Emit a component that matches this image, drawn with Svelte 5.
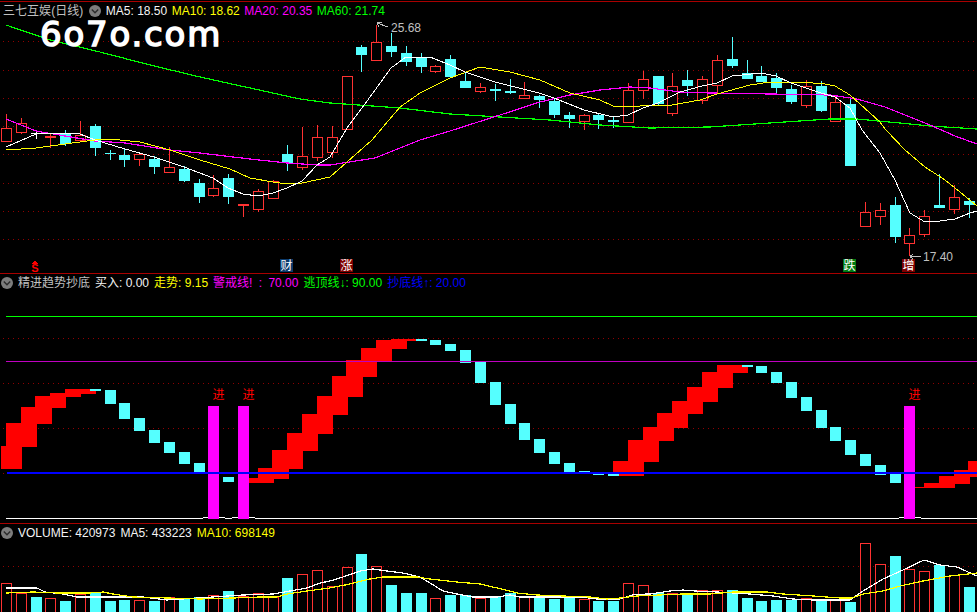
<script>
  const xAt = (i) => Math.floor(6.5 + 14.81 * i)

  // type, high, body top, body bottom, low (page y)
  const candles = [
    ['r',114,128,141,142],['r',118,123,132,134],['w',130,134,134,139],['r',133,137,137,148],
    ['c',130,134,144,146],['r',121,135,140,141],['c',124,126,148,156],['c',150,154,154,160],
    ['c',148,155,160,167],['r',154,154,159,166],['c',156,159,167,174],['r',147,167,172,173],
    ['c',166,169,181,182],['c',179,183,197,203],['r',175,188,195,197],['c',174,178,197,204],
    ['r',205,205,205,217],['r',189,191,209,212],['r',180,181,198,199],['c',145,154,163,171],
    ['r',127,156,167,170],['r',125,137,157,161],['r',126,137,152,158],['r',76,76,129,130],
    ['c',45,47,55,72],['r',25,42,60,60],['c',33,46,52,57],['c',46,53,62,66],
    ['c',53,58,67,73],['r',65,66,71,73],['c',55,59,77,77],['c',72,81,88,88],
    ['r',83,87,91,93],['c',84,89,91,101],['c',79,91,93,94],['r',82,95,98,98],
    ['c',95,96,100,108],['c',98,101,115,118],['c',112,115,119,128],['r',114,115,121,130],
    ['c',114,115,120,129],['c',116,120,122,128],['r',83,90,122,123],['r',71,79,90,99],
    ['c',76,76,104,106],['r',73,86,113,116],['c',70,80,86,96],['r',76,79,100,104],
    ['r',55,60,85,94],['c',37,59,66,68],['c',60,73,79,79],['c',66,76,82,82],
    ['c',73,78,88,95],['c',85,89,102,104],['r',80,86,105,108],['c',81,86,111,112],
    ['r',96,102,121,121],['c',97,104,166,166],['r',202,212,226,226],['r',203,210,216,225],
    ['c',197,205,237,243],['r',228,235,243,256],['r',210,216,234,237],['c',174,205,208,208],
    ['r',185,197,209,214],['c',198,201,205,218]
  ]

  const ma60 = '6,25 50,40 100,52 150,65 200,77 250,88 300,99 330,103 400,108 450,114 500,117 550,120 600,125 650,128 710,127 770,123 830,119 857,119 900,123 930,126 977,129'
  const ma20 = '6,119 36,131 65,136 95,141 125,143 170,150 200,153 250,159 287,163 317,165 330,165 375,158 420,140 450,131 500,115 540,102 570,95 600,90 630,87 650,88 680,92 710,93 770,94 830,95 857,99 885,107 930,125 955,136 977,144'
  const ma10 = '6,150 36,148 65,144 95,140 110,139 140,142 170,150 200,160 230,169 250,178 273,182 287,184 302,183 330,177 372,140 400,107 420,93 450,78 480,67 510,72 540,80 570,93 600,100 613,106 640,106 672,105 700,100 717,94 750,85 770,82 800,82 825,84 835,86 850,95 880,122 886,130 905,150 925,167 945,180 960,192 977,206'
  const ma5 = '6,147 36,134 50,133 80,134 95,140 125,149 154,157 184,167 213,178 228,188 243,194 258,196 273,193 287,188 302,181 317,165 330,157 347,128 370,97 391,68 406,57 430,57 450,65 465,72 495,82 539,93 554,98 584,110 613,117 628,115 643,108 658,103 680,92 702,86 717,83 732,76 761,73 776,76 791,83 821,93 835,97 850,108 862,130 880,153 895,180 905,202 910,213 925,222 940,221 955,219 970,213 977,211'

  // indicator pane blocks: index, top, bottom
  const redBars = [
    [0,446,469],[1,423,447],[2,407,424],[3,396,408],[4,393,397],[5,389,394],
    [17,478,483],[18,468,479],[19,450,469],[20,433,451],[21,414,434],[22,396,415],
    [23,376,397],[24,360,377],[25,348,361],[26,340,349],[27,339,341],
    [42,461,476],[43,440,462],[44,427,441],[45,413,428],[46,401,414],[47,387,402],
    [48,372,388],[49,365,373],[62,487,488],[63,483,488],[64,476,484],[65,470,477],[66,461,471]
  ]
  const cyanBars = [
    [6,389,391],[7,390,404],[8,403,419],[9,418,431],[10,430,443],[11,442,453],[12,452,464],
    [13,463,473],[15,477,482],[28,339,341],[29,340,345],[30,344,351],[31,350,363],[32,362,383],
    [33,382,405],[34,404,424],[35,423,440],[36,439,453],[37,452,464],[38,463,473],[39,471,473],
    [40,474,475],[41,474,476],[50,365,367],[51,366,373],[52,372,383],[53,382,398],[54,397,411],
    [55,410,428],[56,427,441],[57,440,455],[58,454,466],[59,465,475],[60,474,483]
  ]
  const entries = [14, 16, 61]

  const vols = [
    ['r',583],['r',593],['c',597],['r',598],['c',601],['r',594],['c',592],['c',601],['c',600],['r',600],
    ['c',601],['r',597],['c',598],['c',597],['r',595],['c',591],['r',596],['r',593],['r',597],['c',578],
    ['r',574],['r',570],['r',586],['r',567],['c',554],['r',566],['c',585],['c',593],['c',593],['r',598],
    ['c',595],['c',595],['r',598],['c',596],['c',593],['r',596],['c',598],['c',599],['c',597],['r',599],
    ['c',601],['c',601],['r',583],['r',585],['c',593],['r',593],['c',594],['r',590],['r',590],['c',590],
    ['c',598],['c',601],['c',600],['c',600],['r',598],['c',600],['r',600],['c',602],['r',543],['r',564],
    ['c',556],['r',569],['r',571],['c',565],['r',575],['c',587]
  ]
  const volMa5 = '6,588 37,588 45,592 63,594 77,597 103,597 143,597 167,600 213,597 243,595 273,594 290,591 307,588 320,583 330,581 343,577 360,571 373,569 387,571 403,573 420,577 430,583 443,591 457,594 473,597 497,597 510,595 520,597 537,597 557,597 580,597 597,599 620,599 632,595 647,594 650,594 670,591 683,590 695,591 717,592 750,594 773,596 793,599 813,600 850,600 863,591 883,579 903,570 924,560 940,565 957,567 977,576'
  const volMa10 = '6,593 33,592 57,593 90,593 103,592 113,594 133,597 167,598 200,599 233,598 260,597 277,597 287,594 307,591 330,588 350,584 370,579 383,577 417,577 430,579 457,582 480,584 497,588 517,593 537,595 563,596 590,597 607,599 620,598 637,596 660,595 683,594 710,594 733,592 767,592 783,594 813,596 840,598 852,598 863,594 883,591 900,586 923,581 950,576 977,573'

  const volBase = 612
</script>

{#snippet chevron()}
  <svg class="chevron" width="12" height="12" viewBox="0 0 12 12">
    <circle cx="6" cy="6" r="6" fill="#7d7d7d" />
    <polyline points="2.8,4.6 6,7.8 9.2,4.6" fill="none" stroke="#2c2c2c" stroke-width="1.4" />
  </svg>
{/snippet}

{#snippet dots(ys)}
  {#each ys as y}
    <line class="dot" x1="3" x2="977" y1={y + 0.5} y2={y + 0.5} />
  {/each}
{/snippet}

<div class="screen">
  <section class="pane first">
    <header class="legend">
      <span class="grey stock">三七互娱 (日线)</span>
      {@render chevron()}
      <span class="white">MA5: 18.50</span>
      <span class="yellow">MA10: 18.62</span>
      <span class="magenta">MA20: 20.35</span>
      <span class="green">MA60: 21.74</span>
    </header>
    <div class="watermark">6o7o.com</div>
    <svg class="chart" width="977" height="253" viewBox="0 20 977 253" shape-rendering="crispEdges">
      {@render dots([41, 70, 98, 126, 154, 183, 211, 239])}

      {#each candles as [t, high, top, bottom, low], i}
        {@const x = xAt(i)}
        <line class={'wick ' + t} x1={x + 0.5} x2={x + 0.5} y1={high} y2={low} />
        {#if top === bottom}
          <rect class={'fill ' + t} x={x - 5} y={top - 1} width="11" height={t === 'r' ? 2 : 1} />
        {:else if t === 'c'}
          <rect class="fill c" x={x - 5} y={top} width="11" height={bottom - top} />
        {:else}
          <rect class="hollow" x={x - 4.5} y={top + 0.5} width="10" height={bottom - top} />
        {/if}
      {/each}

      <polyline class="ma" stroke="#00ff00" points={ma60} />
      <polyline class="ma" stroke="#ff00ff" points={ma20} />
      <polyline class="ma thin" stroke="#ffff00" points={ma10} />
      <polyline class="ma thin" stroke="#ffffff" points={ma5} />

      <path class="pointer" d="M377 23L388 27M377 23L382 22.5M377 23L379 27" />
      <text class="tag" x="391" y="32">25.68</text>
      <path class="pointer" d="M910 256.5H921M910 256.5L913 254M910 256.5L913 259" />
      <text class="tag" x="923" y="261">17.40</text>

      <path d="M35 260.5L38 264H32Z" fill="#ff0000" />
      <text class="sign-s" x="35" y="272">S</text>
      <rect x="280" y="259" width="13" height="13" fill="#0b3a6b" />
      <text class="sign" x="286.5" y="270">财</text>
      <rect x="340" y="259" width="13" height="13" fill="#7d0000" />
      <text class="sign" x="346.5" y="270">涨</text>
      <rect x="843" y="259" width="13" height="13" fill="#007a10" />
      <text class="sign" x="849.5" y="270">跌</text>
      <rect x="902" y="259" width="13" height="13" fill="#7d0000" />
      <text class="sign" x="908.5" y="270">增</text>
    </svg>
  </section>

  <section class="pane">
    <header class="legend">
      {@render chevron()}
      <span class="grey">精进趋势抄底</span>
      <span class="white">买入: 0.00</span>
      <span class="yellow">走势: 9.15</span>
      <span class="magenta alert">警戒线! : 70.00</span>
      <span class="green">逃顶线↓: 90.00</span>
      <span class="blue">抄底线↑: 20.00</span>
    </header>
    <svg class="chart" width="977" height="231" viewBox="0 292 977 231" shape-rendering="crispEdges">
      {@render dots([338, 383, 428, 473])}

      <path class="base" d="M6 518.5H203M203 517.5H208M219 517.5H225M225 518.5H232M232 517.5H238M249 517.5H255M255 518.5H899M899 517.5H904M915 517.5H921M921 518.5H977" />

      {#each redBars as [i, top, bottom]}
        {@const x = Math.max(xAt(i) - 15, 1)}
        <rect fill="#ff0000" {x} y={top} width={xAt(i) + 16 - x} height={bottom - top} />
      {/each}
      {#each cyanBars as [i, top, bottom]}
        <rect fill="#55ffff" x={xAt(i) - 5} y={top} width="11" height={bottom - top} />
      {/each}
      {#each entries as i}
        <rect fill="#ff00ff" x={xAt(i) - 5} y="406" width="11" height="113" />
        <text class="entry" x={xAt(i) + 5.5} y="399">进</text>
      {/each}

      <line x1="6" x2="977" y1="316.5" y2="316.5" stroke="#00ff00" />
      <line x1="6" x2="977" y1="361.5" y2="361.5" stroke="#c000c0" />
      <rect x="7" y="472" width="970" height="2" fill="#0000ff" />
    </svg>
  </section>

  <section class="pane last">
    <header class="legend short">
      {@render chevron()}
      <span class="white">VOLUME: 420973</span>
      <span class="white">MA5: 433223</span>
      <span class="yellow">MA10: 698149</span>
    </header>
    <svg class="chart" width="977" height="71" viewBox="0 541 977 71" shape-rendering="crispEdges">
      {@render dots([566])}
      {#each vols as [t, top], i}
        {#if t === 'c'}
          <rect class="fill c" x={xAt(i) - 5} y={top} width="11" height={volBase - top} />
        {:else}
          <rect class="hollow" x={xAt(i) - 4.5} y={top + 0.5} width="10" height={volBase - top + 4} />
        {/if}
      {/each}
      <polyline class="ma" stroke="#ffffff" points={volMa5} />
      <polyline class="ma" stroke="#ffff00" points={volMa10} />
    </svg>
  </section>
</div>

<style>
  :global(body) {
    background: #000;
  }

  .screen {
    width: 977px;
    height: 612px;
    overflow: hidden;
    background: #000;
    display: flex;
    flex-direction: column;
    font-family: "Liberation Sans", "Noto Sans CJK SC", sans-serif;
    font-size: 12px;
  }

  .pane {
    position: relative;
    border-top: 1px solid #a80000;
  }

  .first {
    margin-top: 1px;
  }

  .legend {
    height: 18px;
    display: flex;
    align-items: center;
    gap: 5px;
    padding-left: 1px;
    white-space: nowrap;
    line-height: 1;
  }

  .first .legend {
    padding-left: 3px;
    gap: 4.5px;
  }

  .first .chevron {
    margin-left: 1.5px;
  }

  .short {
    height: 17px;
  }

  .stock {
    word-spacing: -3px;
  }

  .alert {
    word-spacing: 3px;
  }

  .chevron {
    flex: none;
  }

  .chart {
    display: block;
    overflow: visible;
  }

  .grey { color: #c0c0c0; }
  .white { color: #f4f4f4; }
  .yellow { color: #ffff00; }
  .magenta { color: #ff00ff; }
  .green { color: #00ff00; }
  .blue { color: #0000ff; }

  .watermark {
    position: absolute;
    left: 40px;
    top: 18px;
    font-family: "DejaVu Sans", sans-serif;
    font-size: 34px;
    line-height: 28px;
    letter-spacing: 1.8px;
    color: #fff;
    -webkit-text-stroke: 1.5px #fff;
  }

  .dot {
    stroke: #900000;
    stroke-dasharray: 1 4;
  }

  .wick.r { stroke: #ff3232; }
  .wick.c { stroke: #55ffff; }
  .wick.w { stroke: #ffffff; }
  .fill.r { fill: #ff3232; }
  .fill.c { fill: #55ffff; }
  .fill.w { fill: #ffffff; }

  .hollow {
    fill: #000;
    stroke: #ff3232;
  }

  .ma {
    fill: none;
    stroke-width: 1.2;
  }

  .ma.thin {
    stroke-width: 1;
  }

  .base {
    fill: none;
    stroke: #fff;
  }

  .pointer {
    fill: none;
    stroke: #c0c0c0;
  }

  .tag {
    fill: #c0c0c0;
    font-size: 12px;
  }

  .sign {
    fill: #fff;
    font-size: 12px;
    text-anchor: middle;
  }

  .sign-s {
    fill: #ff0000;
    font-size: 11px;
    font-weight: 700;
    text-anchor: middle;
  }

  .entry {
    fill: #ff0000;
    font-size: 12px;
    text-anchor: middle;
  }
</style>
